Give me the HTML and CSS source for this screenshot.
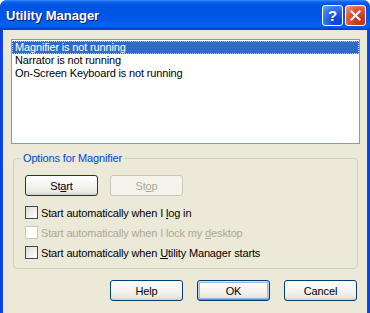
FILE: index.html
```html
<!doctype html>
<html>
<head>
    <meta charset="utf-8">
    <title>Utility Manager</title>
    <link rel="stylesheet" href="styles.css">
</head>
<body>
<div class="um-window">
    <div class="um-titlebar">
        <span class="um-title">Utility Manager</span>
        <div class="um-caption">
            <span class="um-cap-btn um-cap-help">?</span>
            <span class="um-cap-btn um-cap-close">
                <svg width="11" height="11" viewBox="0 0 11 11">
                    <path d="M1.5 1.5 L9.5 9.5 M9.5 1.5 L1.5 9.5" stroke="#fff" stroke-width="2" stroke-linecap="square"/>
                </svg>
            </span>
        </div>
    </div>

    <div class="um-client">
        <ul class="um-list">
            <li class="um-selected">Magnifier is not running</li>
            <li>Narrator is not running</li>
            <li>On-Screen Keyboard is not running</li>
        </ul>

        <fieldset class="um-group">
            <legend>Options for Magnifier</legend>

            <div class="um-run-buttons">
                <button class="um-btn">St<u>a</u>rt</button>
                <button class="um-btn" disabled>St<u>o</u>p</button>
            </div>

            <label class="um-check"><input type="checkbox"><span>Start automatically when I <u>l</u>og in</span></label>
            <label class="um-check um-off"><input type="checkbox" disabled><span>Start automatically when I lock my <u>d</u>esktop</span></label>
            <label class="um-check"><input type="checkbox"><span>Start automatically when <u>U</u>tility Manager starts</span></label>
        </fieldset>

        <div class="um-dialog-buttons">
            <button class="um-btn">Help</button>
            <button class="um-btn um-default">OK</button>
            <button class="um-btn">Cancel</button>
        </div>
    </div>
</div>
</body>
</html>
```

FILE: styles.css
```css
body {
    margin: 0;
    background: #ffffff;
    font-family: "Liberation Sans", Arial, sans-serif;
    font-size: 11px;
    letter-spacing: -0.15px;
    color: #000;
}

/* window frame */
.um-window {
    width: 370px;
    height: 313px;
    display: flex;
    flex-direction: column;
    background: linear-gradient(to right, #0831d9, #0a4be4 1px, #0a4be4 369px, #0831d9);
    border-radius: 7px 7px 0 0;
    overflow: hidden;
}

.um-titlebar {
    flex: none;
    height: 30px;
    display: flex;
    align-items: center;
    justify-content: space-between;
    padding: 0 4px 0 6px;
    background: linear-gradient(#3c8cf8 0, #0d61ee 2px, #0054e3 5px, #0055e5 18px, #0461f2 24px, #0058ee 27px, #0045d0 29px, #003cc4 30px);
}

.um-title {
    color: #fff;
    font-weight: bold;
    font-size: 13px;
    letter-spacing: 0;
    text-shadow: 1px 1px 0 #0a1883;
    margin-top: 1px;
}

.um-caption {
    display: flex;
    gap: 2px;
    margin-top: 1px;
}

.um-cap-btn {
    width: 21px;
    height: 21px;
    box-sizing: border-box;
    border: 1px solid #fff;
    border-radius: 3px;
    display: flex;
    align-items: center;
    justify-content: center;
}

.um-cap-help {
    background: radial-gradient(circle at 75% 80%, #0f48d8 20%, #3d7bf0 70%, #7aa6f8);
    color: #fff;
    font-weight: bold;
    font-size: 15px;
}

.um-cap-close {
    background: radial-gradient(circle at 75% 80%, #c8381c 20%, #e2593a 60%, #f0a088);
}

/* dialog body */
.um-client {
    flex: 1;
    margin: 0 3px;
    background: #ece9d8;
    display: flex;
    flex-direction: column;
}

.um-list {
    list-style: none;
    margin: 9px 7px 0 8px;
    padding: 1px 0 0;
    height: 105px;
    box-sizing: border-box;
    background: #fff;
    border: 1px solid #7f9db9;
}

.um-list li {
    line-height: 13px;
    padding-left: 3px;
}

.um-list .um-selected {
    background: #316ac5;
    color: #fff;
    outline: 1px dotted #d8d08a;
    outline-offset: -1px;
}

.um-group {
    margin: 8px 9px 0 10px;
    padding: 10px 11px 5px;
    border: 1px solid #d0d0bf;
    border-radius: 4px;
    height: 117px;
    box-sizing: border-box;
    min-width: 0;
}

.um-group legend {
    color: #0046d5;
    line-height: 13px;
    padding: 0 2px;
    margin-left: -4px;
}

.um-run-buttons {
    display: flex;
    gap: 12px;
    margin-bottom: 7px;
}

.um-btn {
    width: 73px;
    height: 21px;
    box-sizing: border-box;
    padding: 0;
    border: 1px solid #003c74;
    border-radius: 3px;
    background: linear-gradient(#ffffff, #f4f3ee 55%, #ebe8dd 85%, #d6d0c5);
    font: inherit;
    letter-spacing: inherit;
    color: #000;
}

.um-btn:disabled {
    border-color: #c9c7ba;
    background: #f5f4ea;
    color: #aca899;
}

.um-default {
    box-shadow: inset 0 1px 0 #cee7ff, inset 0 -1px 0 #6982ee, inset 1px 0 0 #b8d4f5, inset -1px 0 0 #b8d4f5, inset 0 0 0 2px #98b8ea;
}

.um-check {
    display: flex;
    align-items: flex-start;
    height: 20px;
    line-height: 20px;
    white-space: nowrap;
}

.um-check input {
    appearance: none;
    width: 13px;
    height: 13px;
    margin: 3px 3px 0 0;
    box-sizing: border-box;
    border: 1px solid #1c5180;
    background: linear-gradient(135deg, #dcdcd7, #ffffff);
}

.um-off {
    color: #aca899;
}

.um-off input {
    border-color: #cac8bb;
    background: #fff;
}

.um-dialog-buttons {
    display: flex;
    justify-content: flex-end;
    gap: 14px;
    margin-top: 11px;
    padding-right: 10px;
}
```
